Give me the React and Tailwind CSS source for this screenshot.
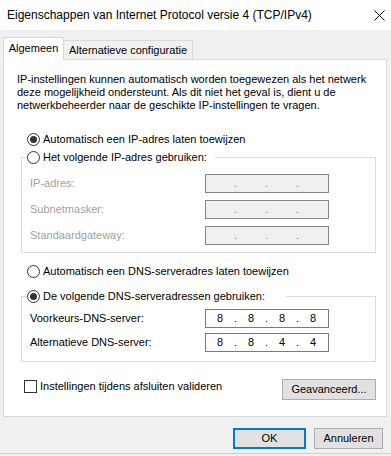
import React from 'react';

function Radio({ checked, label, disabled }) {
  return (
    <span className="flex items-center h-[16px] whitespace-nowrap">
      <span className="w-[13px] h-[13px] rounded-full border border-[#333333] bg-white flex items-center justify-center shrink-0">
        {checked && <span className="w-[7px] h-[7px] rounded-full bg-[#333333]" />}
      </span>
      <span className={`ml-[3px] ${disabled ? 'text-[#a0a0a0]' : 'text-black'}`}>{label}</span>
    </span>
  );
}

function IpField({ values, disabled }) {
  const cells = values || ['', '', '', ''];
  return (
    <div
      className={`w-[124px] h-[19px] border flex items-center pl-[2px] ${
        disabled ? 'bg-[#f0f0f0] border-[#858585] text-[#858585]' : 'bg-white border-[#7a7a7a] text-black'
      }`}
    >
      {cells.map((v, i) => (
        <React.Fragment key={i}>
          <span className="w-[24px] text-center">{v}</span>
          {i < 3 && <span className="w-[7px] text-center">.</span>}
        </React.Fragment>
      ))}
    </div>
  );
}

function FieldRow({ label, values, disabled, className }) {
  return (
    <div className={`flex items-center h-[19px] pl-[8px] ${className || ''}`}>
      <span className={`w-[175px] whitespace-nowrap ${disabled ? 'text-[#a0a0a0]' : 'text-black'}`}>{label}</span>
      <IpField values={values} disabled={disabled} />
    </div>
  );
}

function Button({ children, primary, className }) {
  return (
    <button
      className={`h-[21px] bg-[#e1e1e1] flex items-center justify-center text-black ${
        primary ? 'border-2 border-[#0078d7]' : 'border border-[#adadad]'
      } ${className || ''}`}
    >
      {children}
    </button>
  );
}

export default function App() {
  return (
    <div className="w-[391px] h-[456px] bg-[#f0f0f0] flex flex-col overflow-hidden text-[11px] leading-[13px] text-black font-['Liberation_Sans',Arial,sans-serif]">
      {/* Title bar */}
      <div className="h-[30px] bg-white flex items-center justify-between pl-[7px] pr-[6px] shrink-0">
        <span className="text-[12px] whitespace-nowrap">Eigenschappen van Internet Protocol versie 4 (TCP/IPv4)</span>
        <svg width="11" height="11" viewBox="0 0 11 11">
          <path d="M0.5 0.5 L10.5 10.5 M10.5 0.5 L0.5 10.5" stroke="#000" strokeWidth="1" />
        </svg>
      </div>

      {/* Tabs */}
      <div className="flex items-end pl-[3px] mt-[7px] h-[22px] shrink-0">
        <div className="w-[61px] h-[23px] bg-white border border-b-0 border-[#d9d9d9] flex items-center justify-center relative z-10 mb-[-1px] pb-[1px]">
          Algemeen
        </div>
        <div className="w-[129px] h-[19px] bg-[#f0f0f0] border border-l-0 border-b-0 border-[#d9d9d9] flex items-center justify-center whitespace-nowrap">
          Alternatieve configuratie
        </div>
      </div>

      {/* Panel */}
      <div className="ml-[3px] w-[384px] h-[358px] bg-white border border-[#d9d9d9] flex flex-col shrink-0">
        <p className="mt-[13px] pl-[13px] whitespace-nowrap">
          IP-instellingen kunnen automatisch worden toegewezen als het netwerk
          <br />
          deze mogelijkheid ondersteunt. Als dit niet het geval is, dient u de
          <br />
          netwerkbeheerder naar de geschikte IP-instellingen te vragen.
        </p>

        <div className="mt-[19px] pl-[23px]">
          <Radio checked label="Automatisch een IP-adres laten toewijzen" />
        </div>

        <fieldset className="mt-[2px] ml-[17px] w-[355px] border border-[#dcdcdc] pb-[7px]">
          <legend className="ml-[5px] w-[188px]">
            <Radio label="Het volgende IP-adres gebruiken:" />
          </legend>
          <FieldRow className="mt-[9px]" label="IP-adres:" disabled />
          <FieldRow className="mt-[7px]" label="Subnetmasker:" disabled />
          <FieldRow className="mt-[7px]" label="Standaardgateway:" disabled />
        </fieldset>

        <div className="mt-[10px] pl-[23px]">
          <Radio label="Automatisch een DNS-serveradres laten toewijzen" />
        </div>

        <fieldset className="mt-[9px] ml-[17px] w-[355px] border border-[#dcdcdc] pb-[9px]">
          <legend className="ml-[5px] w-[259px]">
            <Radio checked label="De volgende DNS-serveradressen gebruiken:" />
          </legend>
          <FieldRow className="mt-[5px]" label="Voorkeurs-DNS-server:" values={['8', '8', '8', '8']} />
          <FieldRow className="mt-[5px]" label="Alternatieve DNS-server:" values={['8', '8', '4', '4']} />
        </fieldset>

        <div className="mt-[17px] flex items-start justify-between pl-[20px] pr-[10px]">
          <label className="flex items-center mt-[1px] h-[13px] whitespace-nowrap">
            <span className="w-[13px] h-[13px] border border-[#333333] bg-white shrink-0" />
            <span className="ml-[3px]">Instellingen tijdens afsluiten valideren</span>
          </label>
          <Button className="w-[94px]">Geavanceerd...</Button>
        </div>
      </div>

      {/* Footer buttons */}
      <div className="mt-[11px] flex justify-end gap-[8px] pr-[8px] shrink-0">
        <Button primary className="w-[73px]">OK</Button>
        <Button className="w-[69px]">Annuleren</Button>
      </div>
      <div className="flex-1" />
      <div className="h-[3px] border-t border-[#cfcfcf] shrink-0" />
    </div>
  );
}
